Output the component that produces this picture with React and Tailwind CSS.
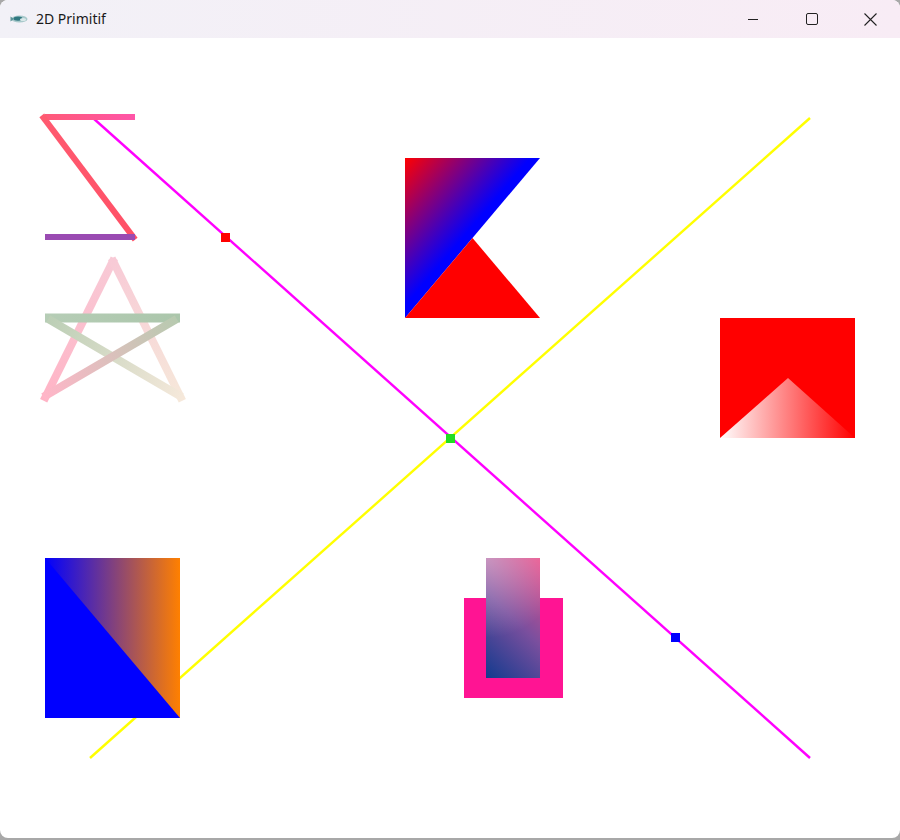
import React from "react";

function Seg({ x1, y1, x2, y2, c1, c2, id, w = 6, ext = 0 }) {
  const dx = x2 - x1;
  const dy = y2 - y1;
  const L = Math.hypot(dx, dy);
  const ux = (dx / L) * ext;
  const uy = (dy / L) * ext;
  return (
    <>
      <defs>
        <linearGradient id={id} gradientUnits="userSpaceOnUse" x1={x1} y1={y1} x2={x2} y2={y2}>
          <stop offset="0" stopColor={c1} />
          <stop offset="1" stopColor={c2} />
        </linearGradient>
      </defs>
      <line x1={x1 - ux} y1={y1 - uy} x2={x2 + ux} y2={y2 + uy} stroke={`url(#${id})`} strokeWidth={w} strokeLinecap="butt" />
    </>
  );
}

export default function App() {
  return (
    <div className="w-[900px] h-[840px] bg-[#a8a8a8]">
      <div className="w-[900px] h-[838px] flex flex-col bg-white rounded-lg overflow-hidden" style={{ fontFamily: '"Noto Sans", "Open Sans", sans-serif' }}>
        <div className="h-[38px] flex items-center bg-gradient-to-r from-[#f2f1f7] to-[#f8ecf5] shrink-0">
          <div className="w-[36px] flex items-center justify-center pl-[2px]">
            <svg width="18" height="10" viewBox="0 0 18 10">
              <ellipse cx="9.5" cy="5" rx="8" ry="3.6" fill="#a9c9cb" />
              <ellipse cx="8" cy="4.6" rx="4.5" ry="2.2" fill="#2f7880" />
              <ellipse cx="13" cy="5.5" rx="3" ry="1.6" fill="#d9e8e9" />
              <path d="M0.5 2.5 L4 5 L0.5 7.5 Z" fill="#5b9499" />
            </svg>
          </div>
          <span className="text-[14px] text-[#1a1a1a] leading-none">2D Primitif</span>
          <div className="ml-auto flex h-full">
            <div className="w-[59px] flex items-center justify-center">
              <svg width="12" height="12" viewBox="0 0 12 12"><line x1="1" y1="6.5" x2="11" y2="6.5" stroke="#222" strokeWidth="1" /></svg>
            </div>
            <div className="w-[59px] flex items-center justify-center">
              <svg width="12" height="12" viewBox="0 0 12 12"><rect x="0.5" y="0.5" width="11" height="11" rx="1.5" fill="none" stroke="#222" strokeWidth="1" /></svg>
            </div>
            <div className="w-[59px] flex items-center justify-center">
              <svg width="13" height="13" viewBox="0 0 13 13"><path d="M0.5 0.5 L12.5 12.5 M12.5 0.5 L0.5 12.5" stroke="#222" strokeWidth="1.1" /></svg>
            </div>
          </div>
        </div>
        <div className="relative flex-1">
          <svg width="900" height="800" viewBox="0 38 900 800" className="absolute inset-0">
            <defs>
              <linearGradient id="kgrad" gradientUnits="userSpaceOnUse" x1="405" y1="158" x2="478" y2="220">
                <stop offset="0" stopColor="#ff0000" />
                <stop offset="1" stopColor="#0000ff" />
              </linearGradient>
              <linearGradient id="rtri" gradientUnits="userSpaceOnUse" x1="720" y1="0" x2="855" y2="0">
                <stop offset="0" stopColor="#ffffff" />
                <stop offset="1" stopColor="#ff0000" />
              </linearGradient>
              <linearGradient id="bo" gradientUnits="userSpaceOnUse" x1="45" y1="0" x2="180" y2="0">
                <stop offset="0" stopColor="#0000ff" />
                <stop offset="1" stopColor="#ff8000" />
              </linearGradient>
              <linearGradient id="inner" gradientUnits="userSpaceOnUse" x1="486" y1="678" x2="573" y2="591">
                <stop offset="0" stopColor="#123a8e" />
                <stop offset="0.5" stopColor="#7a4f9e" />
                <stop offset="1" stopColor="#e94f8a" />
              </linearGradient>
              <radialGradient id="innerglow" gradientUnits="userSpaceOnUse" cx="486" cy="558" r="80">
                <stop offset="0" stopColor="#ffffff" stopOpacity="0.4" />
                <stop offset="1" stopColor="#ffffff" stopOpacity="0" />
              </radialGradient>
            </defs>

            {/* Lines (underneath shapes) */}
            <line x1="90" y1="758" x2="810" y2="118" stroke="#ffff00" strokeWidth="2.4" />
            <line x1="93" y1="118" x2="810" y2="758" stroke="#ff00ff" strokeWidth="2.4" />

            {/* Z shape */}
            <Seg id="z1" x1={45} y1={117} x2={135} y2={117} c1="#ff5a78" c2="#ff55a8" w={6} />
            <Seg id="z2" x1={43} y1={117} x2={134} y2={238} c1="#ff5a70" c2="#ff5066" w={6} ext={2} />
            <Seg id="z3" x1={45} y1={237} x2={135} y2={237} c1="#9a4bb2" c2="#9a4bb2" w={6} />

            {/* Star */}
            <Seg id="s1" x1={113} y1={261} x2={45} y2={398} c1="#f8cad6" c2="#ffb4c6" w={8} ext={3} />
            <Seg id="s2" x1={113} y1={261} x2={181} y2={398} c1="#f8cad6" c2="#f6e8da" w={8} ext={3} />
            <Seg id="s3" x1={45} y1={318} x2={180} y2={318} c1="#b6cdb6" c2="#abc6ab" w={9} />
            <Seg id="s4" x1={50} y1={320} x2={180} y2={396} c1="#bccfb6" c2="#f4e8da" w={8} ext={2} />
            <Seg id="s5" x1={175} y1={320} x2={45} y2={396} c1="#b8cab0" c2="#ffb6c8" w={8} ext={2} />

            {/* K shape */}
            <polygon points="405,158 540,158 405,318" fill="url(#kgrad)" />
            <polygon points="405,318 472.5,238 540,318" fill="#ff0000" />

            {/* Right shape */}
            <rect x="720" y="318" width="135" height="120" fill="#ff0000" />
            <polygon points="720,438 788,378 855,438" fill="url(#rtri)" />

            {/* Bottom-left */}
            <rect x="45" y="558" width="135" height="160" fill="url(#bo)" />
            <polygon points="45,558 45,718 180,718" fill="#0000ff" />

            {/* Pink */}
            <rect x="464" y="598" width="99" height="100" fill="#ff1493" />
            <rect x="486" y="558" width="54" height="120" fill="url(#inner)" />
            <rect x="486" y="558" width="54" height="120" fill="url(#innerglow)" />

            {/* Points */}
            <rect x="221" y="233" width="9" height="9" fill="#ff0000" />
            <rect x="446" y="434" width="9" height="9" fill="#22dd22" />
            <rect x="671" y="633" width="9" height="9" fill="#0000ff" />
          </svg>
        </div>
      </div>
    </div>
  );
}
